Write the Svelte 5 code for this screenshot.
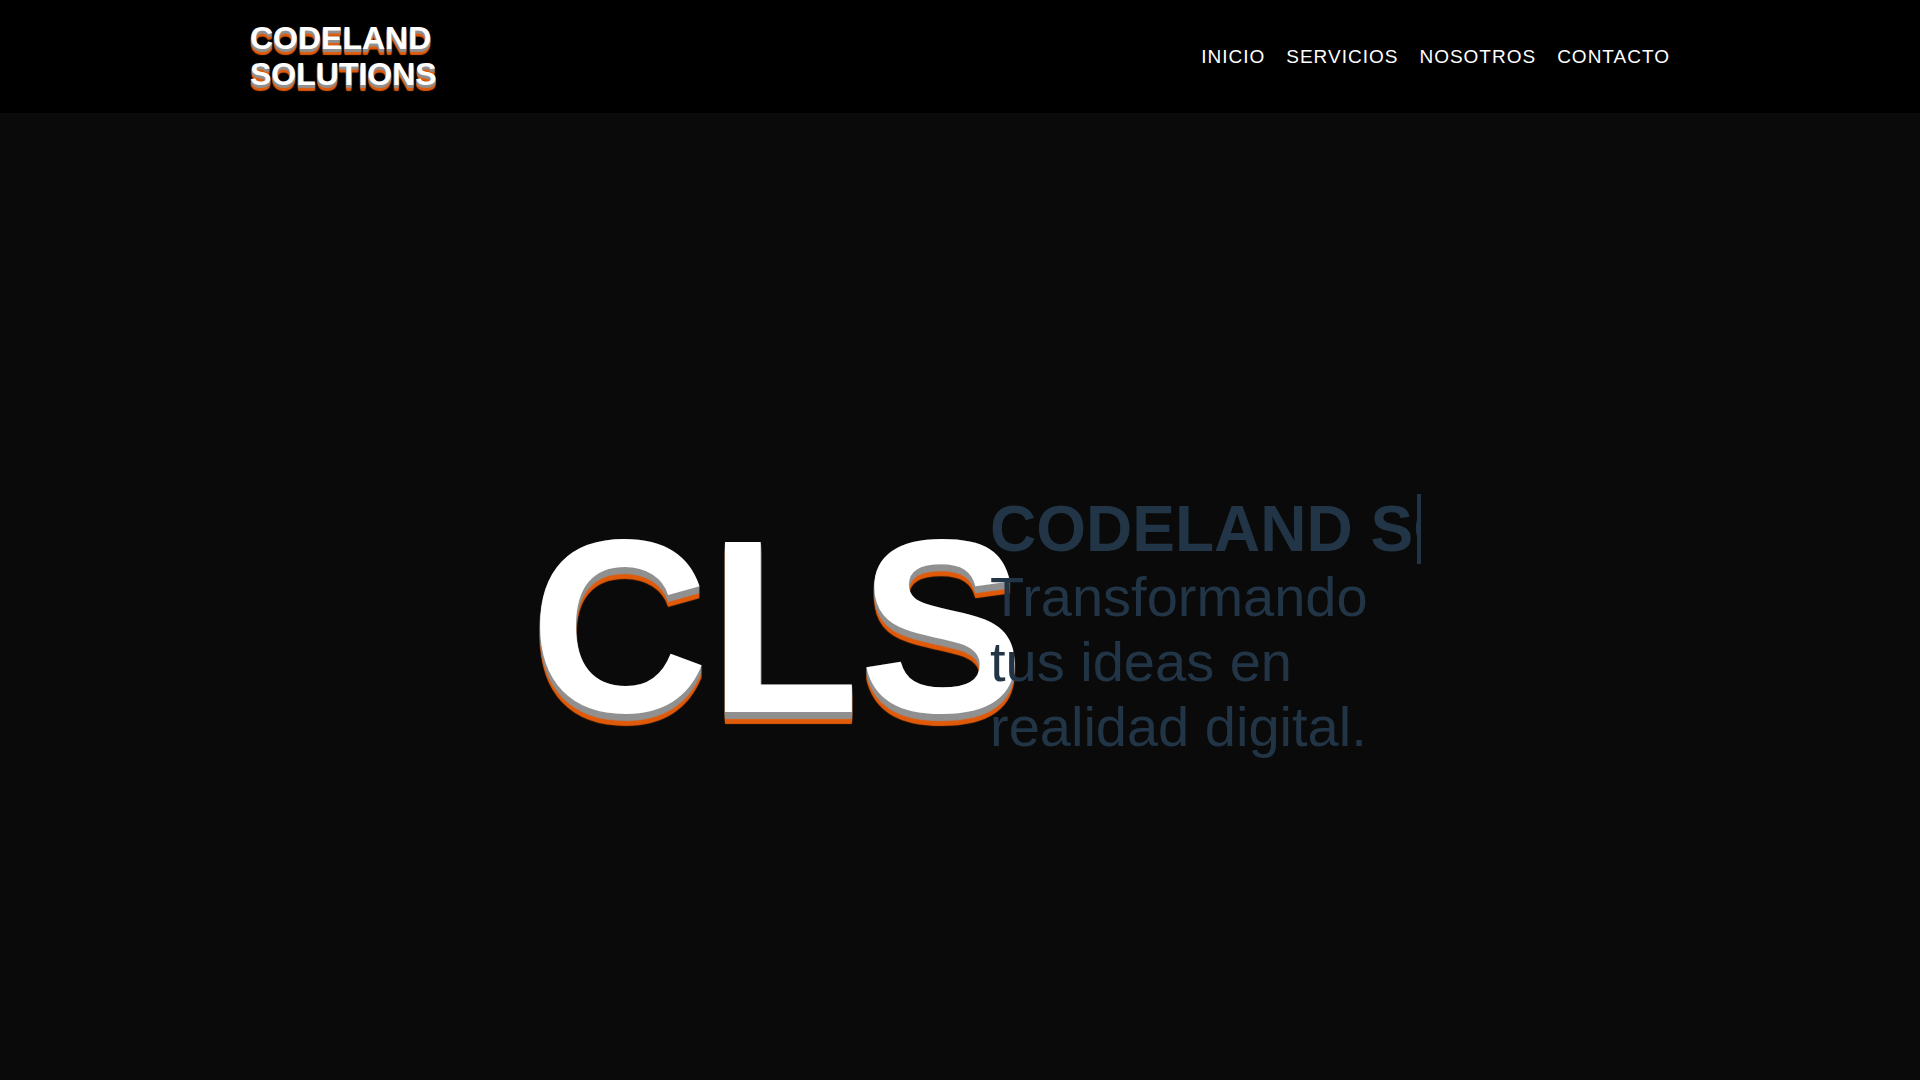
<script lang="ts">
	type NavLink = {
		label: string;
		href: string;
	};

	const links: NavLink[] = [
		{ label: 'INICIO', href: '#inicio' },
		{ label: 'SERVICIOS', href: '#servicios' },
		{ label: 'NOSOTROS', href: '#nosotros' },
		{ label: 'CONTACTO', href: '#contacto' }
	];
</script>

<header class="header">
	<div class="header__inner">
		<a class="header__logo" href="#inicio">CODELAND SOLUTIONS</a>
		<nav class="header__nav" aria-label="Principal">
			{#each links as link (link.href)}
				<a class="header__link" href={link.href}>{link.label}</a>
			{/each}
		</nav>
	</div>
</header>

<main class="hero" id="inicio">
	<div class="hero__mark">CLS</div>
	<div class="hero__text">
		<h1 class="hero__title">CODELAND SOLUTIONS</h1>
		<p class="hero__tagline">Transformando tus ideas en realidad digital.</p>
	</div>
</main>

<style>
	:global(body) {
		background: #0a0a0a;
		color: #213547;
		font-family: 'Liberation Sans', Arial, sans-serif;
		margin: 0;
	}

	.header {
		background: #000;
	}

	.header__inner {
		align-items: center;
		box-sizing: border-box;
		display: flex;
		justify-content: space-between;
		margin: 0 auto;
		max-width: 1460px;
		min-height: 113px;
		padding: 20px;
	}

	.header__logo {
		align-self: flex-start;
		color: #fff;
		font-size: 32px;
		font-weight: 700;
		line-height: 36px;
		max-width: 200px;
		text-decoration: none;
		text-shadow:
			0 1px 1px #919191,
			0 2px 1px #919191,
			0 3px 1px #919191,
			0 4px 1px #e15b0b,
			0 5px 1px #e15b0b,
			0 6px 1px #e15b0b;
	}

	.header__nav {
		display: flex;
		flex-wrap: wrap;
		gap: 21px;
	}

	.header__link {
		color: #fff;
		font-size: 19px;
		letter-spacing: 1px;
		line-height: 22px;
		text-decoration: none;
	}

	.hero {
		align-items: center;
		box-sizing: border-box;
		display: flex;
		justify-content: center;
		min-height: calc(100vh - 113px);
		padding: 60px 0 0 31px;
	}

	.hero__mark {
		color: #fff;
		font-size: 247px;
		font-weight: 700;
		line-height: 1;
		text-shadow:
			0 1px 1px #919191,
			0 2px 1px #919191,
			0 3px 1px #919191,
			0 4px 1px #919191,
			0 5px 1px #919191,
			0 6px 1px #919191,
			0 7px 1px #919191,
			0 8px 1px #e15b0b,
			0 9px 1px #e15b0b,
			0 10px 1px #e15b0b,
			0 11px 1px #e15b0b,
			0 12px 1px #e15b0b;
	}

	/* The text runs over the last letter of the mark. */
	.hero__text {
		margin-left: -34px;
		position: relative;
		width: 431px;
	}

	.hero__title {
		border-right: 4px solid #213547;
		font-size: 64px;
		line-height: 70px;
		margin: 0;
		overflow: hidden;
		white-space: nowrap;
	}

	.hero__tagline {
		font-size: 56px;
		line-height: 65px;
		margin: 0;
	}
</style>
